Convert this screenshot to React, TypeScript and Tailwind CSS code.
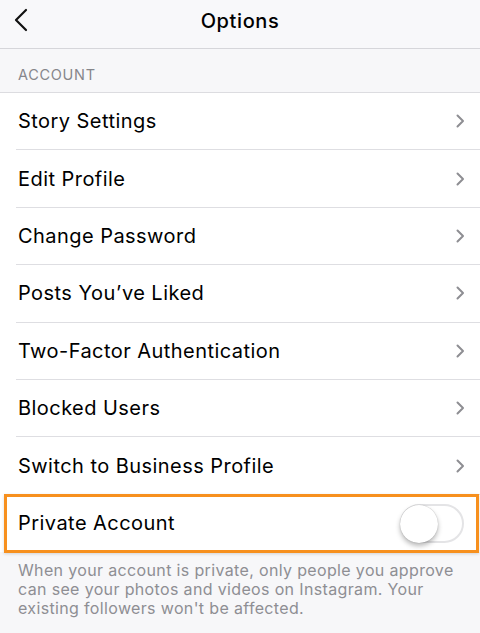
import React from "react";

const items = [
  "Story Settings",
  "Edit Profile",
  "Change Password",
  "Posts You’ve Liked",
  "Two-Factor Authentication",
  "Blocked Users",
  "Switch to Business Profile",
];

function Chevron() {
  return (
    <svg width="12" height="18" viewBox="0 0 12 18" className="shrink-0">
      <path d="M3.5 3.5 L9 9 L3.5 14.5" fill="none" stroke="#8e8e93" strokeWidth="2" strokeLinecap="round" strokeLinejoin="round" />
    </svg>
  );
}

export default function App() {
  return (
    <div
      className="w-[480px] h-[633px] bg-[#f7f7f9] overflow-hidden text-black"
      style={{ fontFamily: "Inter, 'Liberation Sans', sans-serif" }}
    >
      <div className="relative h-[49px] flex items-center justify-center pb-[7px] bg-[#f8f8fa] border-b border-[#d6d6da]">
        <svg width="18" height="26" viewBox="0 0 18 26" className="absolute left-[12px] top-[7px]">
          <path d="M14 3 L4 13 L14 23" fill="none" stroke="#111" strokeWidth="2.2" strokeLinecap="round" strokeLinejoin="round" />
        </svg>
        <span className="text-[20px] font-medium tracking-[0.6px]">Options</span>
      </div>
      <div className="h-[44px] flex items-center pl-[18px] pt-[9px] text-[14.5px] text-[#86868b] tracking-[0.7px] border-b border-[#dcdce0]">
        ACCOUNT
      </div>
      <div className="bg-white">
        {items.map((t) => (
          <div key={t} className="h-[57.4px] flex pl-[16px]">
            <div className="flex-1 flex items-center justify-between pr-[14px] pl-[2px] border-b border-[#dedee2]">
              <span className="text-[20px] tracking-[0.45px]">{t}</span>
              <Chevron />
            </div>
          </div>
        ))}
        <div className="relative h-[57.4px] flex items-center justify-between pl-[18px] pr-[16px]">
          <span className="text-[20px] tracking-[0.45px]">Private Account</span>
          <div className="relative w-[64px] h-[39px] rounded-full border-2 border-[#e4e4e6] bg-white">
            <div className="absolute -left-[2px] -top-[1px] w-[38px] h-[38px] rounded-full bg-white shadow-[0_3px_5px_rgba(0,0,0,0.28),0_0_1px_rgba(0,0,0,0.3)]" />
          </div>
          <div className="absolute left-[4px] right-[1px] -top-[1px] -bottom-[1px] border-[3px] border-[#f7901e] shadow-[0_1px_3px_rgba(0,0,0,0.15)] pointer-events-none" />
        </div>
      </div>
      <p className="px-[18px] pt-[9px] text-[16px] leading-[19px] tracking-[0.35px] text-[#8e8e93]">
        When your account is private, only people you approve can see your photos and videos on Instagram. Your existing followers won't be affected.
      </p>
    </div>
  );
}
